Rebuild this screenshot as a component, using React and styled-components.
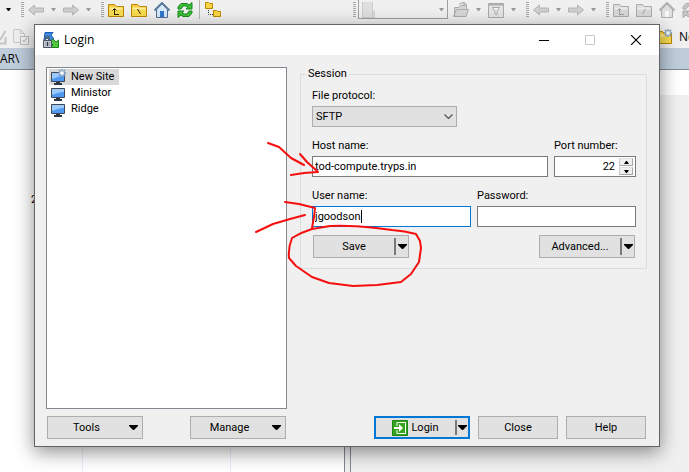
import React from "react";
import styled, { createGlobalStyle, css } from "styled-components";

const GlobalStyle = createGlobalStyle`
  * { box-sizing: border-box; }
  body { margin: 0; }
  button, input, select { font: inherit; color: inherit; margin: 0; padding: 0; }
  body, #root { font: 11px/16px Roboto, "Noto Sans", sans-serif; color: #000; }
`;

/* ---------- Main window behind the dialog ---------- */

const Page = styled.div`
  position: relative;
  display: flex;
  flex-direction: column;
  height: 100vh;
  min-height: 460px;
  overflow: hidden;
  background: #f0f0f0;
`;

const Toolbar = styled.div`
  display: flex;
  align-items: center;
  height: 19px;
  margin-bottom: 7px;
  overflow: hidden;
`;

const Group = styled.div`
  display: flex;
  flex: none;
  align-items: center;
  gap: ${(p) => p.$gap || 7}px;
  margin-left: ${(p) => p.$start || 0}px;
`;

const ToolButton = styled.button`
  display: flex;
  flex: none;
  border: 0;
  background: none;
`;

const Grip = styled.span`
  flex: none;
  width: 3px;
  height: 16px;
  background: repeating-linear-gradient(#a8a8a8 0 1px, #f0f0f0 1px 2px);
`;

const Separator = styled.span`
  flex: none;
  width: 1px;
  height: 20px;
  background: #b4b4b4;
`;

const DriveBox = styled.button`
  display: flex;
  flex: none;
  align-items: center;
  justify-content: space-between;
  width: 90px;
  height: 22px;
  margin-top: -4px;
  padding: 4px 3px 0 3px;
  border: 1px solid #a0a0a0;
  background: #f0f0f0;
`;

const CommandBar = styled.div`
  display: flex;
  justify-content: space-between;
  align-items: center;
  height: 22px;
  overflow: hidden;
`;

const NewLabel = styled.button`
  display: flex;
  align-items: center;
  justify-content: flex-start;
  gap: 7px;
  width: 33px;
  overflow: hidden;
  border: 0;
  background: none;
  font: 12px/16px "Open Sans", sans-serif;
  white-space: nowrap;

  & > svg { flex: none; }
`;

const PathBar = styled.div`
  height: 22px;
  padding-top: 2px;
  border-bottom: 1px solid #7d8794;
  background: #bfcddb;
  font: 12px/18px "Open Sans", sans-serif;
`;

const Panes = styled.div`
  display: grid;
  flex: 1;
  grid-template-columns: 345px minmax(0, 1fr);
  column-gap: 5px;
`;

const LeftPane = styled.div`
  border-right: 1px solid #828790;
  background: linear-gradient(90deg, transparent 82px, #e9eefb 82px 83px, transparent 83px 230px, #e9eefb 230px 231px, transparent 231px), #fff;
`;

const PaneCell = styled.div`
  padding: 122px 0 0 31px;
`;

const RightPane = styled.div`
  border-left: 1px solid #828790;
`;

const PaneHeader = styled.div`
  height: 25px;
  background: #fff;
`;

/* ---------- Dialog ---------- */

const Dialog = styled.section`
  position: absolute;
  inset: 24px 29px 25px 34px;
  display: flex;
  flex-direction: column;
  border: 1px solid #646464;
  background: #f0f0f0;
  box-shadow: 0 5px 18px rgba(0, 0, 0, 0.45);
`;

const TitleBar = styled.header`
  display: flex;
  align-items: center;
  height: 30px;
  padding-left: 8px;
  gap: 5px;
  background: #fff;
`;

const Title = styled.h1`
  flex: 1;
  margin: 0;
  font: 12px/16px "Open Sans", sans-serif;
`;

const WindowButtons = styled.div`
  display: flex;
`;

const WindowButton = styled.button`
  display: flex;
  align-items: center;
  justify-content: center;
  width: 46px;
  height: 29px;
  border: 0;
  background: none;
`;

const Body = styled.div`
  display: grid;
  flex: 1;
  grid-template-columns: 241px minmax(0, 1fr);
  column-gap: 13px;
  min-height: 0;
  padding: 12px 12px 7px 11px;
`;

const SiteList = styled.ul`
  margin: 0;
  padding: 1px 2px;
  border: 1px solid #828790;
  background: #fff;
  list-style: none;
`;

const SiteItem = styled.li`
  display: flex;
`;

const SiteButton = styled.button`
  display: flex;
  align-items: center;
  gap: 5px;
  height: 16px;
  padding: 0 5px 0 1px;
  border: 0;
  background: ${(p) => (p.$selected ? "#d9d9d9" : "none")};
`;

const Session = styled.fieldset`
  align-self: start;
  min-width: 0;
  margin: 0;
  padding: 7px 10px 10px 11px;
  border: 1px solid #dcdcdc;
`;

const Legend = styled.legend`
  margin-left: -6px;
  padding: 0 2px;
  line-height: 14px;
`;

const FieldRow = styled.div`
  display: grid;
  grid-template-columns: ${(p) => p.$columns};
  gap: 6px;
  margin-bottom: ${(p) => p.$after || 11}px;
`;

const Field = styled.div`
  display: flex;
  flex-direction: column;
  gap: 2px;
  min-width: 0;
`;

const Label = styled.label`
  line-height: 16px;
`;

const SelectBox = styled.div`
  display: grid;
  width: 145px;
  height: 21px;
  align-items: center;

  & > * { grid-area: 1 / 1; }
  & > svg { justify-self: end; margin-right: 4px; pointer-events: none; }
`;

const Select = styled.select`
  appearance: none;
  width: 100%;
  height: 100%;
  padding: 0 3px;
  border: 1px solid #adadad;
  border-radius: 0;
  background: #e1e1e1;
`;

const InputBox = styled.div`
  display: flex;
  align-items: center;
  height: 21px;
  padding: 1px 2px;
  border: 1px solid ${(p) => (p.$active ? "#0078d7" : "#7a7a7a")};
  background: #fff;
`;

const Input = styled.input`
  flex: 1;
  min-width: 0;
  border: 0;
  outline: 0;
  background: none;
  text-align: ${(p) => p.$align || "left"};
  ${(p) => p.$fit && css`
    flex: none;
    field-sizing: content;
    caret-color: transparent;
  `}
`;

const Caret = styled.span`
  width: 1px;
  height: 13px;
  background: #000;
`;

const Spinner = styled.div`
  display: flex;
  flex-direction: column;
  gap: 1px;
  margin-left: 4px;
`;

const SpinButton = styled.button`
  display: flex;
  align-items: center;
  justify-content: center;
  width: 14px;
  height: 8px;
  border: 1px solid #a6a6a6;
  border-top-color: #e3e3e3;
  border-left-color: #c8c8c8;
  background: #f0f0f0;
`;

const Actions = styled.div`
  display: flex;
  justify-content: space-between;
  padding: 0 1px;
`;

const ButtonFrame = styled.div`
  display: flex;
  width: 96px;
  height: 23px;
  border: ${(p) => (p.$primary ? "2px solid #0078d7" : "1px solid #adadad")};
  background: #e1e1e1;
`;

const MainPart = styled.button`
  display: flex;
  flex: 1;
  align-items: center;
  justify-content: center;
  gap: 3px;
  border: 0;
  background: none;
`;

const ArrowPart = styled.button`
  display: flex;
  align-items: center;
  justify-content: center;
  width: ${(p) => (p.$primary ? 13 : 14)}px;
  margin: 2px 0;
  padding: 0;
  border: 0;
  border-left: 2px solid #787878;
  background: none;
`;

const PlainButton = styled.button`
  width: 80px;
  height: 23px;
  border: 1px solid #adadad;
  background: #e1e1e1;
`;

const MenuButton = styled.button`
  display: flex;
  align-items: center;
  width: 96px;
  height: 23px;
  padding: 0 4px 0 0;
  border: 1px solid #adadad;
  background: #e1e1e1;

  & > span { flex: 1; padding-right: 4px; }
`;

const Footer = styled.footer`
  display: flex;
  justify-content: space-between;
  padding: 0 13px 7px 12px;
`;

const FooterGroup = styled.div`
  display: flex;
  gap: ${(p) => p.$gap}px;
`;

const Annotation = styled.svg`
  position: absolute;
  top: 0;
  left: 0;
  pointer-events: none;
`;

/* ---------- Icons ---------- */

const Svg = ({ w = 16, h = 16, children, ...rest }) => (
  <svg width={w} height={h} viewBox={`0 0 ${w} ${h}`} fill="none" aria-hidden="true" {...rest}>{children}</svg>
);

const Triangle = ({ color = "#000" }) => (
  <Svg w={9} h={5}><path d="M0 0H9V1L5 5H4L0 1Z" fill={color} /></Svg>
);
const SmallTriangle = ({ color = "#9a9a9a", up }) => (
  <Svg w={5} h={3}><path d={up ? "M0 3L2 0H3L5 3Z" : "M0 0H5L3 3H2Z"} fill={color} /></Svg>
);
const ArrowIcon = ({ right }) => (
  <Svg>
    <path
      d={right ? "M15.5 8L9.5 3V6H0.5V10H9.5V13Z" : "M0.5 8L6.5 3V6H15.5V10H6.5V13Z"}
      fill="#cfcfcf" stroke="#b4b4b4"
    />
  </Svg>
);
const FolderIcon = ({ kind, gray, gear }) => {
  const line = gray ? "#acacac" : "#bd8500";
  const mark = gray ? "#a0a0a0" : "#302400";
  return (
    <Svg>
      <path d="M0.5 14.5V2.5H6.5L8.5 4.5H15.5V14.5Z" fill={gray ? "#dcdcdc" : "#f5ce42"} stroke={line} />
      <path d="M1.5 6.5H14.5" stroke={gray ? "#ececec" : "#fff0a0"} strokeWidth="2" />
      <path d="M1 8H15V14H1Z" fill={gray ? "#d8d8d8" : "#f8dc50"} />
      {kind === "up" && <path d="M6.5 12V7M4.5 8.5L6.5 6.5L8.5 8.5M6 12.5H11" stroke={mark} />}
      {kind === "root" && <path d={gray ? "M9.5 7L6.5 12" : "M6.5 7L9.5 12"} stroke={mark} />}
      {gear && <GearShape x={12} y={4} />}
    </Svg>
  );
};
const GearShape = ({ x, y }) => (
  <g transform={`translate(${x} ${y})`}>
    <path d="M0-4V4M-4 0H4M-3-3L3 3M3-3L-3 3" stroke="#7897b8" strokeWidth="1.5" />
    <circle r="2.2" fill="#fff" stroke="#a3bad0" />
  </g>
);
const HomeIcon = ({ gray }) => (
  <Svg>
    <path d="M2.5 7.5V15.5H13.5V7.5L8 2Z" fill={gray ? "#dedede" : "#d8e9fb"} stroke={gray ? "#adadad" : "#526e91"} />
    <path d="M0.5 8.5L8 1L15.5 8.5" stroke={gray ? "#b0b0b0" : "#617c9d"} strokeWidth="2" />
    <path d="M6 9H10V15H6Z" fill={gray ? "#f6f6f6" : "#2f76cf"} />
  </Svg>
);
const RefreshIcon = ({ gray }) => {
  const fill = gray ? "#c8c8c8" : "#40bd37";
  const line = gray ? "#a8a8a8" : "#168a20";
  return (
    <Svg>
      <path d="M1 7V5L4 1.5H10L12 3L15 0.5V7H9L11 5L8.5 4H6L4 7Z" fill={fill} stroke={line} />
      <path d="M15 9V11L12 14.5H6L4 13L1 15.5V9H7L5 11L7.5 12H10L12 9Z" fill={fill} stroke={line} />
    </Svg>
  );
};
const TreeIcon = () => (
  <Svg>
    <path d="M0.5 6.5V0.5H3.5L4.5 1.5H7.5V6.5ZM8.5 14.5V8.5H11.5L12.5 9.5H15.5V14.5Z" fill="#f8d646" stroke="#bd8500" />
    <path d="M3.5 8V12.5H8" stroke="#333" strokeDasharray="1 1" />
  </Svg>
);
const OpenFolderIcon = () => (
  <Svg><path d="M1.5 14.5V5.5H6L7.5 3.5H13.5V7.5M0.5 14.5L3.5 7.5H15.5L13 14.5ZM6 2.5Q10 -1 13 2M11 0V3H14" fill="#d6d6d6" stroke="#acacac" /></Svg>
);
const FilterIcon = () => (
  <Svg><path d="M0.5 1.5H15.5V15.5H0.5Z" fill="#e4e4e4" stroke="#aaa" /><path d="M1 2.5H15" stroke="#aaa" strokeWidth="2" /><path d="M4.5 5.5H11.5L9 9V13L7 12V9Z" fill="#f4f4f4" stroke="#aaa" /></Svg>
);
const DriveIcon = () => (
  <Svg w={13} h={16}><path d="M0.5 0V15.5H12.5V9L10.5 8V0M10.5 9V15" fill="#dedede" stroke="#cdcdcd" /></Svg>
);
const PencilIcon = () => (
  <Svg w={7}><path d="M0 14.5H5.5V8M0 11L5.5 2" stroke="#c4c4c4" strokeWidth="2" /></Svg>
);
const PageCheckIcon = () => (
  <Svg><path d="M0.5 0.5H7.5L11.5 4.5V13.5H0.5ZM7.5 1V4.5H11" fill="#eee" stroke="#c8c8c8" /><path d="M7.5 7.5H15.5V15.5H7.5Z" fill="#f3f3f3" stroke="#bababa" /><path d="M9.5 11L11 13L14 9" stroke="#b0b0b0" /></Svg>
);
const LoginIcon = () => (
  <Svg>
    <path d="M2 0.5H10L8 3L11 7L7 9L4 6L1 8Z" fill="#3b8ae5" stroke="#1b5cae" />
    <path d="M15.5 8V15.5H8L10 13L7 10L10 7L13 10Z" fill="#4fc83e" stroke="#1a851c" />
    <path d="M2.5 9V7Q2.5 4.5 4.5 4.5T6.5 7V9" stroke="#59616d" strokeWidth="1.5" />
    <path d="M0.5 8.5H8.5V15.5H0.5Z" fill="#c3cad3" stroke="#4b535f" />
    <path d="M2 11H7M2 13H7" stroke="#8a94a1" />
    <path d="M4.5 10V14" stroke="#303844" />
  </Svg>
);
const MonitorIcon = ({ gear }) => (
  <Svg>
    <path d="M1.5 3.5H14.5V12.5H1.5Z" fill="#4f98ef" stroke="#3c4857" />
    <path d="M2 4H14V7Q9 7 2 10Z" fill="#9dc8fa" />
    <path d="M6 13H10V14H12V16H4V14H6Z" fill="#30363f" />
    {gear && <GearShape x={12} y={4} />}
  </Svg>
);
const EnterIcon = () => (
  <Svg>
    <path d="M0.5 0.5H15.5V15.5H0.5Z" fill="#35a51f" stroke="#208515" />
    <path d="M5 6V2.5H13.5V13.5H5V10" stroke="#fff" />
    <path d="M2 7H7V4L11 8L7 12V9H2Z" fill="#fff" />
  </Svg>
);

const Tool = ({ name, children }) => <ToolButton type="button" aria-label={name}>{children}</ToolButton>;

const History = () => (
  <>
    <Tool name="Back"><ArrowIcon /></Tool>
    <Tool name="Back history"><SmallTriangle /></Tool>
    <Tool name="Forward"><ArrowIcon right /></Tool>
    <Tool name="Forward history"><SmallTriangle /></Tool>
  </>
);

const Navigation = ({ gray }) => (
  <>
    <Tool name="Parent directory"><FolderIcon kind="up" gray={gray} /></Tool>
    <Tool name="Root directory"><FolderIcon kind="root" gray={gray} /></Tool>
    <Tool name="Home directory"><HomeIcon gray={gray} /></Tool>
    <Tool name="Refresh"><RefreshIcon gray={gray} /></Tool>
  </>
);

const SplitButton = ({ label, icon, primary }) => (
  <ButtonFrame $primary={primary}>
    <MainPart type="button">{icon}{label}</MainPart>
    <ArrowPart type="button" $primary={primary} aria-label={`${label} options`}><Triangle /></ArrowPart>
  </ButtonFrame>
);

const DropButton = ({ label }) => (
  <MenuButton type="button"><span>{label}</span><Triangle /></MenuButton>
);

const sites = ["New Site", "Ministor", "Ridge"];

export default function App() {
  return (
    <Page>
      <GlobalStyle />
      <Toolbar>
        <Group $start={6}><Tool name="More"><SmallTriangle color="#000" /></Tool></Group>
        <Group $start={10}><Grip /></Group>
        <Group $start={4} $gap={7}><History /></Group>
        <Group $start={10}><Grip /></Group>
        <Group $start={4} $gap={7}><Navigation /></Group>
        <Group $start={6} $gap={5}><Separator /><Tool name="Tree"><TreeIcon /></Tool></Group>
        <Group $start={132} $gap={2}>
          <Grip />
          <DriveBox type="button" aria-label="Drive"><DriveIcon /><SmallTriangle /></DriveBox>
        </Group>
        <Group $start={5} $gap={7}>
          <Tool name="Open"><OpenFolderIcon /></Tool>
          <Tool name="Open options"><SmallTriangle /></Tool>
          <Tool name="Filter"><FilterIcon /></Tool>
          <Tool name="Filter options"><SmallTriangle /></Tool>
        </Group>
        <Group $start={10}><Grip /></Group>
        <Group $start={4} $gap={7}><History /></Group>
        <Group $start={10}><Grip /></Group>
        <Group $start={4} $gap={7}><Navigation gray /></Group>
      </Toolbar>
      <CommandBar>
        <Group $gap={6}>
          <Tool name="Edit"><PencilIcon /></Tool>
          <Tool name="Properties"><PageCheckIcon /></Tool>
        </Group>
        <NewLabel type="button"><FolderIcon gear />New</NewLabel>
      </CommandBar>
      <PathBar>AR\</PathBar>
      <Panes>
        <LeftPane><PaneCell>2</PaneCell></LeftPane>
        <RightPane><PaneHeader /></RightPane>
      </Panes>

      <Dialog role="dialog" aria-labelledby="dialog-title">
        <TitleBar>
          <LoginIcon />
          <Title id="dialog-title">Login</Title>
          <WindowButtons>
            <WindowButton type="button" aria-label="Minimize"><Svg w={10} h={10}><path d="M0 5.5H10" stroke="#000" /></Svg></WindowButton>
            <WindowButton type="button" aria-label="Maximize" disabled><Svg w={10} h={10}><path d="M0.5 0.5H9.5V9.5H0.5Z" stroke="#c8c8c8" /></Svg></WindowButton>
            <WindowButton type="button" aria-label="Close window"><Svg w={10} h={10}><path d="M0 0L10 10M10 0L0 10" stroke="#000" strokeWidth="1.2" /></Svg></WindowButton>
          </WindowButtons>
        </TitleBar>
        <Body>
          <SiteList>
            {sites.map((site, i) => (
              <SiteItem key={site}>
                <SiteButton type="button" $selected={i === 0}><MonitorIcon gear={i === 0} />{site}</SiteButton>
              </SiteItem>
            ))}
          </SiteList>
          <Session>
            <Legend>Session</Legend>
            <FieldRow $columns="1fr">
              <Field>
                <Label htmlFor="protocol">File protocol:</Label>
                <SelectBox>
                  <Select id="protocol" defaultValue="SFTP"><option>SFTP</option></Select>
                  <Svg w={9} h={6}><path d="M0.5 0.5L4.5 4.5L8.5 0.5" stroke="#505050" strokeWidth="1.2" /></Svg>
                </SelectBox>
              </Field>
            </FieldRow>
            <FieldRow $columns="minmax(0, 1fr) 82px">
              <Field>
                <Label htmlFor="host">Host name:</Label>
                <InputBox><Input id="host" defaultValue="tod-compute.tryps.in" /></InputBox>
              </Field>
              <Field>
                <Label htmlFor="port">Port number:</Label>
                <InputBox>
                  <Input id="port" defaultValue="22" $align="right" />
                  <Spinner>
                    <SpinButton type="button" aria-label="Increase port"><SmallTriangle up color="#000" /></SpinButton>
                    <SpinButton type="button" aria-label="Decrease port"><SmallTriangle color="#000" /></SpinButton>
                  </Spinner>
                </InputBox>
              </Field>
            </FieldRow>
            <FieldRow $columns="minmax(0, 1fr) minmax(0, 1fr)" $after={8}>
              <Field>
                <Label htmlFor="user">User name:</Label>
                <InputBox $active><Input id="user" defaultValue="jgoodson" $fit /><Caret /></InputBox>
              </Field>
              <Field>
                <Label htmlFor="password">Password:</Label>
                <InputBox><Input id="password" type="password" /></InputBox>
              </Field>
            </FieldRow>
            <Actions>
              <SplitButton label="Save" />
              <SplitButton label="Advanced..." />
            </Actions>
          </Session>
        </Body>
        <Footer>
          <FooterGroup $gap={47}><DropButton label="Tools" /><DropButton label="Manage" /></FooterGroup>
          <FooterGroup $gap={8}>
            <SplitButton label="Login" icon={<EnterIcon />} primary />
            <PlainButton type="button">Close</PlainButton>
            <PlainButton type="button">Help</PlainButton>
          </FooterGroup>
        </Footer>
      </Dialog>

      <Annotation width="689" height="472" viewBox="0 0 689 472" fill="none" stroke="#f50f0f" strokeWidth="2" strokeLinecap="round" strokeLinejoin="round" aria-hidden="true">
        <path d="M268 143L279 147L291 158L304 165M300 154L307 162L317 171L318 172L304 173L291 175" />
        <path d="M285 202L299 204L315 208L314 217L312 228M256 232L273 224L290 219L305 215" />
        <path d="M312 229Q302 232 292 238Q288 248 289 258L296 266L312 277L329 283L353 286L377 285L401 282L411 274L419 262L421 248L420 241L416 234Q405 231 392 230L376 228Q348 225 330 226L312 229" />
      </Annotation>
    </Page>
  );
}
